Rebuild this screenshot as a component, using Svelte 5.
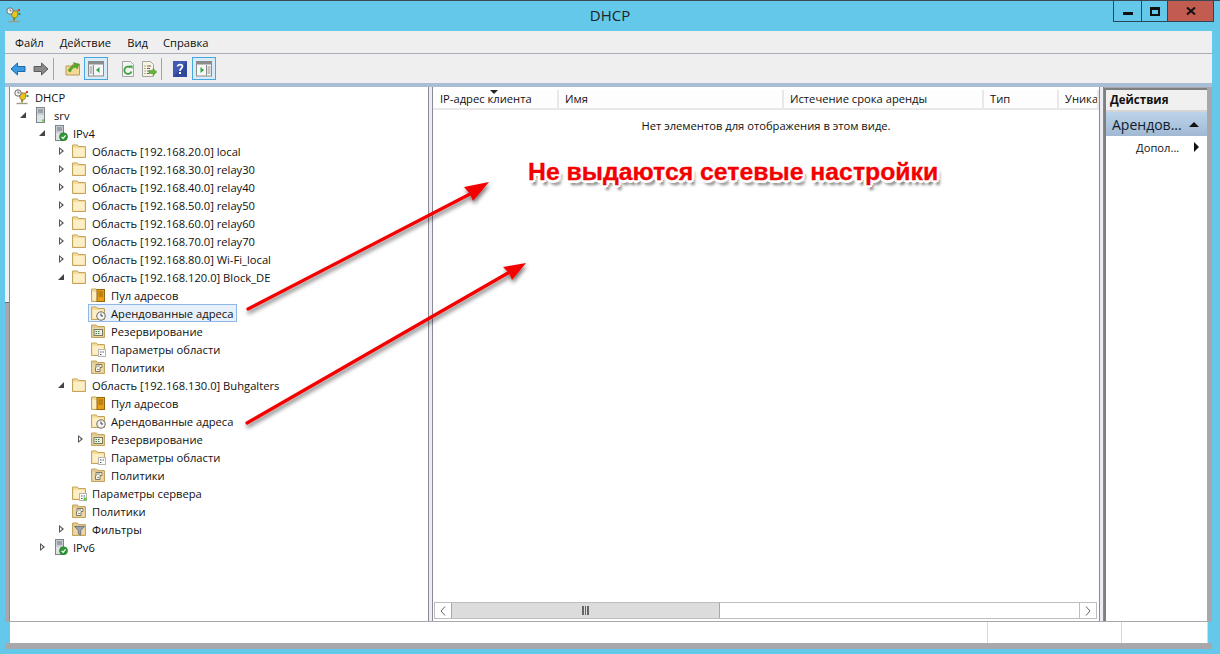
<script>
  const scopes = [
    "Область [192.168.20.0] local",
    "Область [192.168.30.0] relay30",
    "Область [192.168.40.0] relay40",
    "Область [192.168.50.0] relay50",
    "Область [192.168.60.0] relay60",
    "Область [192.168.70.0] relay70",
    "Область [192.168.80.0] Wi-Fi_local",
  ];

  // d = depth, e = expander (open / closed / none), i = icon
  const tree = [
    { d: 0, i: "dhcp", t: "DHCP" },
    { d: 1, e: "open", i: "server", t: "srv" },
    { d: 2, e: "open", i: "serverok", t: "IPv4" },
    ...scopes.map((t) => ({ d: 3, e: "closed", i: "folder", t })),
    { d: 3, e: "open", i: "folder", t: "Область [192.168.120.0] Block_DE" },
    { d: 4, i: "pool", t: "Пул адресов" },
    { d: 4, i: "lease", t: "Арендованные адреса", selected: true },
    { d: 4, i: "reserve", t: "Резервирование" },
    { d: 4, i: "options", t: "Параметры области" },
    { d: 4, i: "policy", t: "Политики" },
    { d: 3, e: "open", i: "folder", t: "Область [192.168.130.0] Buhgalters" },
    { d: 4, i: "pool", t: "Пул адресов" },
    { d: 4, i: "lease", t: "Арендованные адреса" },
    { d: 4, e: "closed", i: "reserve", t: "Резервирование" },
    { d: 4, i: "options", t: "Параметры области" },
    { d: 4, i: "policy", t: "Политики" },
    { d: 3, i: "serveropts", t: "Параметры сервера" },
    { d: 3, i: "policy", t: "Политики" },
    { d: 3, e: "closed", i: "filter", t: "Фильтры" },
    { d: 2, e: "closed", i: "serverok", t: "IPv6" },
  ];

  const columns = [
    { t: "IP-адрес клиента", w: 126 },
    { t: "Имя", w: 226 },
    { t: "Истечение срока аренды", w: 201 },
    { t: "Тип", w: 76 },
    { t: "Уника", w: 41 },
  ];
</script>

{#snippet folderBase(dark)}
  <path d="M1.500 14.500V2h5l1 1.500h6.500a.5.5 0 0 1 .5.5v10.500z" fill={dark ? "#e2c98f" : "#f6dc9a"} stroke="#c4a35c" />
  <path d="M2.500 5h11v8.500h-11z" fill={dark ? "#ecd8a8" : "#fcefc6"} />
{/snippet}

{#snippet icon(kind)}
  <svg class="icon" viewBox="0 0 16 16" width="16" height="16" aria-hidden="true">
    {#if kind === "dhcp"}
      <path d="M5 4h7l-.5 4.500c-.3 1.600-1.400 2.500-2.800 2.500-1.500 0-2.700-1-2.900-2.500z" fill="#e7c51c" stroke="#8a7410" stroke-width=".8" />
      <circle cx="4" cy="4" r="3.200" fill="#f4f4f4" stroke="#6b6b6b" />
      <path d="M4 2.200V4h1.600" fill="none" stroke="#555" stroke-width=".8" />
      <rect x="12" y="2" width="2" height="2" fill="#d84030" />
      <rect x="12.500" y="6" width="2" height="2" fill="#3f8f3f" />
      <path d="M8 10.500v3" stroke="#8a7410" stroke-width="1.600" />
      <path d="M2.500 14.500h11" stroke="#a09a80" stroke-width="1.400" />
    {:else if kind === "server" || kind === "serverok"}
      <rect x="3.500" y=".5" width="8" height="15" fill="#c9ced2" stroke="#7d848a" />
      <path d="M5 3h5M5 5h5" stroke="#6f767c" />
      <path d="M4 8h7v7H4z" fill="#dfe3e6" />
      {#if kind === "server"}
        <rect x="9" y="12.500" width="2" height="2" fill="#5bd13e" />
      {:else}
        <circle cx="11.500" cy="11.800" r="4" fill="#2f9a35" stroke="#1c6d24" stroke-width=".6" />
        <path d="M9.600 11.800l1.500 1.500 2.400-3" fill="none" stroke="#fff" stroke-width="1.200" />
      {/if}
    {:else if kind === "folder"}
      {@render folderBase(false)}
    {:else if kind === "pool"}
      {@render folderBase(false)}
      <rect x="7" y="2.500" width="7.500" height="12" fill="#e5a018" stroke="#96660c" />
      <path d="M8.500 5h4.500M8.500 7h4.500M8.500 9h4.500" stroke="#7d560c" stroke-width=".8" />
    {:else if kind === "lease"}
      {@render folderBase(false)}
      <circle cx="11" cy="11" r="4.200" fill="#f5f5f5" stroke="#666" />
      <path d="M11 8.500V11h2" fill="none" stroke="#444" />
    {:else if kind === "reserve"}
      {@render folderBase(true)}
      <rect x="4" y="6.500" width="8.500" height="6" fill="#eef1e6" stroke="#7a7a60" />
      <path d="M5.500 8.500h1.500M8 8.500h1.500M5.500 10.500h1.500M8 10.500h1.500" stroke="#3f7f3f" />
    {:else if kind === "options" || kind === "serveropts"}
      {@render folderBase(false)}
      <rect x="8.500" y="8.500" width="7" height="7" fill="#fff" stroke="#b5b5b5" />
      <path d="M10 11h1.500M12.500 11H14M10 13.500h1.500" stroke="#555" />
      {#if kind === "serveropts"}
        <rect x="12.500" y="12.500" width="3" height="3" fill="#5bd13e" />
      {/if}
    {:else if kind === "policy"}
      {@render folderBase(true)}
      <path d="M6 5.500h6v3h-2v4H5.500V9H6z" fill="#f7f3e6" stroke="#7f7a64" />
      <path d="M7 7h3M7 10.500h2" stroke="#7f7a64" stroke-width=".8" />
    {:else if kind === "filter"}
      {@render folderBase(true)}
      <path d="M3.500 5.500h10L9.700 9.500v4.500l-2.400-1.200V9.500z" fill="#9aa3ab" stroke="#5f676e" stroke-width=".8" />
    {/if}
  </svg>
{/snippet}

{#snippet panelIcon(flip)}
  <svg viewBox="0 0 16 16" width="16" height="16" aria-hidden="true">
    <rect x=".5" y=".5" width="15" height="14.500" fill="#f7f7f7" stroke="#8c8c8c" />
    <rect x="1" y="1" width="14" height="2.500" fill="#8c8c8c" />
    {#if flip}
      <path d="M1.500 6h3M1.500 8h3M1.500 10h3M1.500 12h3" stroke="#8c8c8c" />
      <path d="M5.500 4v10.500" stroke="#8c8c8c" />
      <path d="M11.500 6v6L8 9z" fill="#2ea84a" />
    {:else}
      <path d="M11.500 6h3M11.500 8h3M11.500 10h3M11.500 12h3" stroke="#8c8c8c" />
      <path d="M10.500 4v10.500" stroke="#8c8c8c" />
      <path d="M4.500 6v6L8 9z" fill="#2ea84a" />
    {/if}
  </svg>
{/snippet}

<div class="window">
  <header class="titlebar">
    <span class="app-icon">{@render icon("dhcp")}</span>
    <span class="title">DHCP</span>
    <div class="controls">
      <div class="ctl min"><i></i></div>
      <div class="ctl max"><i></i></div>
      <div class="ctl close">
        <svg viewBox="0 0 10 8" width="10" height="8"><path d="M1 .5l8 7M9 .5l-8 7" stroke="#111" stroke-width="2" /></svg>
      </div>
    </div>
  </header>

  <div class="frame">
    <nav class="menubar">
      <span>Файл</span><span>Действие</span><span>Вид</span><span>Справка</span>
    </nav>

    <div class="toolbar">
      <svg class="tb" viewBox="0 0 16 14" width="16" height="14" aria-hidden="true"><path d="M7.500 1L1 7l6.500 6V9.500H15v-5H7.500z" fill="#3a9be0" stroke="#1c68a8" /></svg>
      <svg class="tb gap-s" viewBox="0 0 16 14" width="16" height="14" aria-hidden="true"><path d="M8.500 1L15 7l-6.500 6V9.500H1v-5h7.500z" fill="#8a8a8a" stroke="#5c5c5c" /></svg>
      <span class="sep"></span>
      <svg class="tb folderup" viewBox="0 0 16 16" width="16" height="16" aria-hidden="true">
        <path d="M1 14V5h6l1-2h6.500v11z" fill="#f3d993" stroke="#b99a55" />
        <path d="M3 9.500C5 6 7 4.500 10 4L8.500 1.500 14 3.500 12 8l-1-2C8 6.500 6.500 8 5.500 11z" fill="#54ab2c" stroke="#3a7f1c" stroke-width=".5" />
      </svg>
      <button class="boxed first">{@render panelIcon(true)}</button>
      <svg class="tb refresh" viewBox="0 0 16 16" width="16" height="16" aria-hidden="true">
        <path d="M2.500 .5h8l3 3v12h-11z" fill="#f4f4f4" stroke="#a4a4a4" />
        <path d="M11.500 10.500A3.700 3.700 0 1 1 10.500 6.500" fill="none" stroke="#3aa53a" stroke-width="1.800" />
        <path d="M9 4.500h3.500V8z" fill="#3aa53a" />
      </svg>
      <svg class="tb export" viewBox="0 0 16 16" width="16" height="16" aria-hidden="true">
        <path d="M1.500 .5h8l3 3v12h-11z" fill="#f7f3df" stroke="#a4a4a4" />
        <path d="M3.500 5h1M6 5h4M3.500 7.500h1M6 7.500h3M3.500 10h1M6 10h2M3.500 12.500h1M6 12.500h2" stroke="#666" />
        <path d="M8 9.500h4V7.500l3.800 3.500-3.800 3.500v-2H8z" fill="#62b53a" stroke="#3f8a20" stroke-width=".5" />
      </svg>
      <span class="sep"></span>
      <svg class="tb help" viewBox="0 0 14 16" width="14" height="16" aria-hidden="true">
        <rect width="14" height="16" fill="#2f479c" />
        <path d="M0 0h14L0 16z" fill="#4c66c2" opacity=".6" />
        <path d="M4.500 5.500C4.500 3 9.500 3 9.500 5.500 9.500 7.500 7 7.500 7 10" fill="none" stroke="#fff" stroke-width="1.700" />
        <rect x="6" y="11" width="2" height="2" fill="#fff" />
      </svg>
      <button class="boxed last">{@render panelIcon(false)}</button>
    </div>

    <div class="band"></div>

    <div class="panes">
      <div class="gutter"></div>
      <section class="tree">
        {#each tree as n}
          <div class="row" style={`padding-left:${4 + 19 * n.d}px`}>
            <span class="exp {n.e ?? ''}"></span>
            <span class="item" class:selected={n.selected}>
              {@render icon(n.i)}
              <span class="label">{n.t}</span>
            </span>
          </div>
        {/each}
      </section>

      <div class="splitter"></div>

      <section class="list">
        <div class="headers">
          {#each columns as c}
            <div class="col" style={`width:${c.w}px`}>{c.t}</div>
          {/each}
        </div>
        <span class="sort"></span>
        <p class="empty">Нет элементов для отображения в этом виде.</p>
        <div class="hscroll">
          <span class="sb-btn">
            <svg viewBox="0 0 6 10" width="6" height="10"><path d="M5 .5L1 5l4 4.500" fill="none" stroke="#606060" /></svg>
          </span>
          <div class="track">
            <div class="thumb"><i></i><i></i><i></i></div>
          </div>
          <span class="sb-btn">
            <svg viewBox="0 0 6 10" width="6" height="10"><path d="M1 .5L5 5 1 9.500" fill="none" stroke="#606060" /></svg>
          </span>
        </div>
      </section>

      <div class="splitter"></div>

      <aside class="actions">
        <div class="act-head">Действия</div>
        <div class="act-group"><span>Арендов...</span><b class="up"></b></div>
        <div class="act-item"><span>Допол...</span><b class="right"></b></div>
      </aside>
    </div>

    <footer class="status">
      <div class="s1"></div><div class="s2"></div><div class="s3"></div>
    </footer>
  </div>

  <svg class="arrows" viewBox="0 0 1220 654" width="1220" height="654" aria-hidden="true">
    <defs>
      <filter id="sh" x="-10%" y="-10%" width="120%" height="130%">
        <feDropShadow dx="1" dy="3" stdDeviation="2" flood-color="#000" flood-opacity=".55" />
      </filter>
    </defs>
    <g filter="url(#sh)">
      <path d="M248 309L472 193" stroke="#f40000" stroke-width="3.200" stroke-linecap="round" />
      <path d="M489 182L464 187 470 194 473 201z" fill="#f40000" />
      <path d="M247 423L508 273" stroke="#f40000" stroke-width="3.200" stroke-linecap="round" />
      <path d="M526 263L503 267 509 273 512 280z" fill="#f40000" />
    </g>
  </svg>
  <div class="callout">Не выдаются сетевые настройки</div>
</div>

<style>
  :global(body) {
    margin: 0;
    background: #63c8ea;
    font-family: "Open Sans", "Noto Sans", sans-serif;
  }
  .window {
    position: relative;
    width: 1220px;
    height: 654px;
    background: #63c8ea;
    border-top: 1px solid #3a4a55;
    box-sizing: border-box;
    overflow: hidden;
    color: #111;
    font-size: 11.200px;
  }

  /* title bar */
  .titlebar {
    height: 30px;
    display: flex;
    align-items: flex-start;
    position: relative;
  }
  .app-icon { margin: 6px 0 0 6px; }
  .title {
    position: absolute;
    left: 0;
    right: 0;
    top: 4px;
    text-align: center;
    font-size: 15px;
    color: #222;
  }
  .controls {
    position: absolute;
    right: 6px;
    top: 0;
    display: flex;
    height: 21px;
    border: 1px solid #2c4656;
    border-top: 0;
    box-sizing: border-box;
  }
  .ctl {
    display: flex;
    align-items: center;
    justify-content: center;
    border-left: 1px solid #2c4656;
  }
  .min { width: 27px; border-left: 0; }
  .min i { width: 10px; height: 3px; background: #111; margin-top: 4px; }
  .max { width: 25px; }
  .max i { width: 6px; height: 4px; border: 2px solid #111; border-top-width: 3px; }
  .close { width: 45px; background: #c25b50; }

  /* frame */
  .frame {
    margin: 0 8px 0 5px;
    height: 618px;
    display: flex;
    flex-direction: column;
  }
  .menubar {
    height: 22px;
    background: #efefef;
    display: flex;
    align-items: center;
    gap: 16px;
    padding-left: 10px;
    border-bottom: 1px solid #a9adb8;
  }
  .menubar span:nth-child(4) { margin-left: -1px; }
  .toolbar {
    height: 29px;
    background: #efefef;
    display: flex;
    align-items: center;
    padding-left: 5px;
  }
  .tb { flex: none; }
  .gap-s { margin-left: 7px; }
  .sep { width: 1px; height: 22px; background: #a4a4a4; margin-left: 4px; }
  .folderup { margin-left: 11px; }
  .boxed {
    width: 24px;
    height: 23px;
    padding: 0;
    background: #d9ebfa;
    border: 1px solid #45a7e0;
    display: flex;
    align-items: center;
    justify-content: center;
  }
  .first { margin-left: 3px; }
  .refresh { margin-left: 12px; }
  .export { margin-left: 5px; }
  .help { margin-left: 11px; }
  .last { margin-left: 5px; }
  .band { height: 4px; background: #a9bed5; }

  .panes {
    height: 535px;
    background: #a8a8ac;
    display: flex;
    position: relative;
  }
  .gutter {
    position: absolute;
    left: 0;
    top: 0;
    width: 4px;
    height: 216px;
    background: #eef1f8;
    border-bottom: 1px solid #6c6c74;
    box-sizing: border-box;
  }
  .splitter {
    width: 5px;
    flex: none;
    margin-bottom: 1px;
    background: #ecedf2;
    border-left: 1px solid #8a8a96;
    border-right: 1px solid #8a8a96;
    box-sizing: border-box;
  }

  /* tree */
  .tree {
    width: 419px;
    margin-left: 4px;
    background: #fff;
    border-left: 1px solid #8a8a96;
    padding-top: 1px;
    box-sizing: border-box;
    margin-bottom: 1px;
    flex: none;
  }
  .row {
    height: 18px;
    display: flex;
    align-items: center;
  }
  .exp {
    width: 10px;
    height: 10px;
    margin: 0 5px 0 -15px;
    position: relative;
    flex: none;
  }
  .exp.closed::before {
    content: "";
    position: absolute;
    left: 3px;
    top: 1px;
    border-left: 5px solid #555;
    border-top: 4px solid transparent;
    border-bottom: 4px solid transparent;
  }
  .exp.closed::after {
    content: "";
    position: absolute;
    left: 4px;
    top: 3px;
    border-left: 2.500px solid #fff;
    border-top: 2px solid transparent;
    border-bottom: 2px solid transparent;
  }
  .exp.open::before {
    content: "";
    position: absolute;
    left: 2px;
    top: 2px;
    border-right: 6px solid #444;
    border-top: 6px solid transparent;
  }
  .item {
    display: flex;
    align-items: center;
    height: 16px;
    margin-left: -2px;
    padding: 0 3px 0 1px;
    border: 1px solid transparent;
  }
  .item.selected {
    background: #e8f1fb;
    border-color: #8fb8e6;
  }
  .icon { flex: none; }
  .label {
    margin-left: 5px;
    white-space: nowrap;
  }

  /* list */
  .list {
    width: 666px;
    flex: none;
    margin-bottom: 1px;
    background: #fff;
    position: relative;
    display: flex;
    flex-direction: column;
    overflow: hidden;
  }
  .headers {
    display: flex;
    height: 18px;
    margin-top: 3px;
    background: #fdfdfd;
    border-bottom: 2px solid #e8e8e8;
    flex: none;
  }
  .col {
    box-sizing: border-box;
    padding: 1px 0 0 7px;
    border-right: 2px solid #e8e8e8;
    white-space: nowrap;
    overflow: hidden;
    flex: none;
    margin-right: -1px;
  }
  .sort {
    position: absolute;
    left: 57px;
    top: 3px;
    border-top: 4px solid #222;
    border-left: 4px solid transparent;
    border-right: 4px solid transparent;
  }
  .empty {
    margin: 8px 0 0;
    text-align: center;
    flex: 1;
  }
  .hscroll {
    flex: none;
    height: 17px;
    margin: 0 2px 2px 1px;
    border: 1px solid #bdbdbd;
    display: flex;
    box-sizing: border-box;
  }
  .sb-btn {
    width: 16px;
    display: flex;
    align-items: center;
    justify-content: center;
    flex: none;
  }
  .track { flex: 1; border-right: 1px solid #bdbdbd; }
  .hscroll .sb-btn:first-child { border-right: 1px solid #a8a8a8; }
  .thumb {
    width: 267px;
    height: 100%;
    background: #dcdcdc;
    border-right: 1px solid #a8a8a8;
    display: flex;
    align-items: center;
    justify-content: center;
    gap: 1px;
  }
  .thumb i { width: 1.500px; height: 9px; background: #666; }

  /* actions */
  .actions {
    width: 103px;
    flex: none;
    margin-bottom: 1px;
    margin-top: 1px;
    background: #fff;
    border-top: 2px solid #7f7f7f;
    border-left: 2px solid #7f7f7f;
    box-sizing: border-box;
  }
  .act-head {
    height: 20px;
    background: #f0f0f0;
    border-bottom: 2px solid #d4d4d4;
    font-weight: 700;
    font-size: 11.500px;
    padding-left: 4px;
    line-height: 20px;
  }
  .act-group {
    height: 24px;
    background: linear-gradient(#bcd4ea, #a0b8d2);
    display: flex;
    align-items: center;
    justify-content: space-between;
    padding: 0 8px 0 6px;
    font-size: 14px;
    color: #10202e;
  }
  .act-item {
    display: flex;
    align-items: center;
    justify-content: space-between;
    padding: 2px 8px 0 30px;
    height: 18px;
  }
  .up {
    border-bottom: 5px solid #111;
    border-left: 5px solid transparent;
    border-right: 5px solid transparent;
  }
  .right {
    border-left: 5px solid #111;
    border-top: 5px solid transparent;
    border-bottom: 5px solid transparent;
  }

  .status {
    height: 21px;
    background: #fff;
    display: flex;
    margin-left: 5px;
    width: 1198px;
    box-sizing: border-box;
  }
  .s1 { width: 977px; border-right: 1px solid #d8d8d8; }
  .s2 { width: 133px; border-right: 1px solid #d8d8d8; }
  .s3 { width: 85px; border-right: 1px solid #d8d8d8; }
  .frame::after { content: ""; height: 6px; background: #a8a8ac; }

  /* annotation */
  .arrows {
    position: absolute;
    left: 0;
    top: -1px;
    pointer-events: none;
  }
  .callout {
    position: absolute;
    left: 528px;
    top: 156px;
    font-family: "Liberation Sans", sans-serif;
    font-weight: 700;
    font-size: 24.800px;
    line-height: 30px;
    color: #f40000;
    -webkit-text-stroke: 0.3px #f40000;
    white-space: nowrap;
    text-shadow:
      3px 0 0 #fff, -3px 0 0 #fff, 0 3px 0 #fff, 0 -3px 0 #fff,
      2px 2px 0 #fff, -2px 2px 0 #fff, 2px -2px 0 #fff, -2px -2px 0 #fff,
      3px 5px 3px rgba(0, 0, 0, 0.55);
  }
</style>
